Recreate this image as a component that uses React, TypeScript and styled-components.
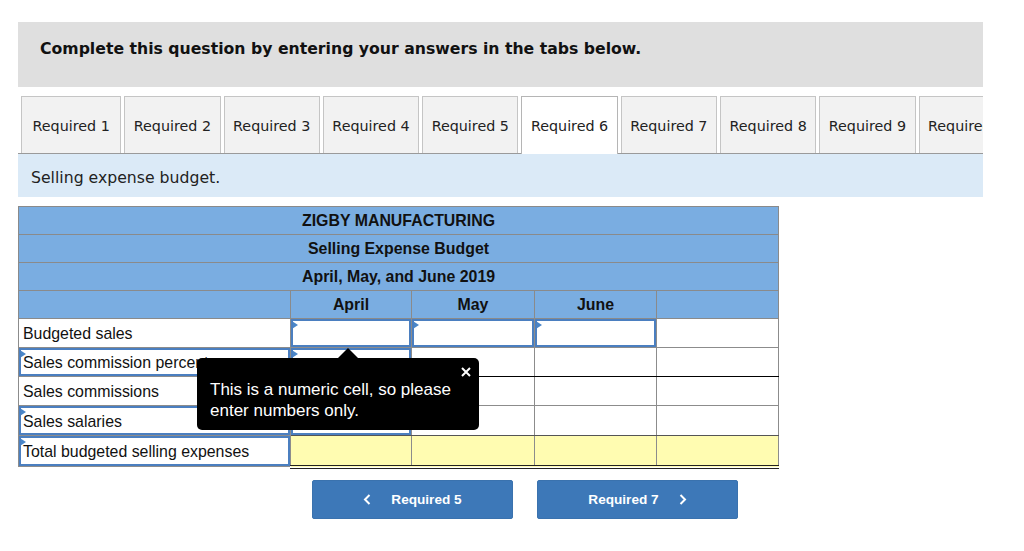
import React from 'react'
import styled, { createGlobalStyle, css } from 'styled-components'

const GlobalStyle = createGlobalStyle`
  body {
    margin: 0;
    background: #fff;
    font-family: "DejaVu Sans", Verdana, sans-serif;
  }
`

const Page = styled.div`
  width: 965px;
  margin-left: 18px;
  padding-top: 22px;
`

const Instructions = styled.div`
  height: 65px;
  box-sizing: border-box;
  padding: 17px 0 0 22px;
  background: #dfdfdf;
  font-weight: bold;
  font-size: 15.7px;
  line-height: 20px;
  color: #111;
`

const TabStrip = styled.div`
  display: flex;
  align-items: flex-start;
  gap: 3px;
  height: 58px;
  margin-top: 9px;
  padding-left: 3px;
  overflow: hidden;
  white-space: nowrap;
  background: linear-gradient(#9a9a9a, #9a9a9a) bottom / 100% 1px no-repeat;
`

const Tab = styled.div<{ $active?: boolean; $first?: boolean }>`
  flex: none;
  height: 57px;
  box-sizing: border-box;
  display: flex;
  align-items: center;
  padding: 2px ${p => (p.$first ? 10.5 : 8.5)}px 0;
  border: 1px solid #c5c5c5;
  border-bottom: none;
  background: #f2f2f2;
  font-size: 14.3px;
  color: #222;
  ${p =>
    p.$active &&
    css`
      height: 58px;
      padding-bottom: 1px;
      background: #fff;
      border-color: #b5b5b5;
    `}
`

const Prompt = styled.div`
  height: 43px;
  box-sizing: border-box;
  display: flex;
  align-items: center;
  padding: 3px 0 0 13px;
  background: #dbeaf7;
  font-size: 15.7px;
  color: #222;
`

const TableWrap = styled.div`
  position: relative;
  width: 760px;
  margin-top: 9px;
`

const Table = styled.table`
  width: 760px;
  table-layout: fixed;
  border-collapse: collapse;
  font-family: "Liberation Sans", Arial, sans-serif;
  font-size: 15.9px;
  color: #111;
`

const HeadCell = styled.th`
  padding: 0;
  height: 27px;
  line-height: 27px;
  background: #7aade1;
  border: 1px solid #8a8a8a;
  font-weight: bold;
  text-align: center;
`

const Cell = styled.td<{ $yellow?: boolean; $lineBelow?: string; $double?: boolean }>`
  padding: 0;
  border: 1px solid #8c8c8c;
  background: ${p => (p.$yellow ? '#fffcb1' : '#fff')};
  ${p => p.$lineBelow && css`border-bottom-color: ${p.$lineBelow};`}
  ${p => p.$double && css`border-bottom: 4px double #222;`}
`

const Plain = styled.div<{ $h?: number }>`
  height: ${p => p.$h ?? 28}px;
  display: flex;
  align-items: center;
  padding: 2px 0 0 4px;
  box-sizing: border-box;
  white-space: nowrap;
  overflow: hidden;
`

const InputBox = styled.div<{ $h?: number }>`
  position: relative;
  height: ${p => p.$h ?? 28}px;
  box-sizing: border-box;
  border: 2px solid #4b7fc0;
  display: flex;
  align-items: center;
  padding: 2px 0 0 2px;
  white-space: nowrap;
  overflow: hidden;

  &::before {
    content: '';
    position: absolute;
    left: -1px;
    top: 0;
    border-left: 6px solid #4a86c8;
    border-top: 4px solid transparent;
    border-bottom: 4px solid transparent;
  }
`

const Tooltip = styled.div`
  position: absolute;
  left: 179px;
  top: 152px;
  width: 282px;
  height: 72px;
  box-sizing: border-box;
  padding: 21px 0 0 13px;
  background: #000;
  border-radius: 5px;
  color: #fff;
  font-family: "Liberation Sans", Arial, sans-serif;
  font-size: 17px;
  line-height: 21px;

  &::before {
    content: '';
    position: absolute;
    top: -10px;
    left: 141px;
    border-left: 10px solid transparent;
    border-right: 10px solid transparent;
    border-bottom: 10px solid #000;
  }
`

const Close = styled.svg`
  position: absolute;
  top: 9px;
  right: 8px;
`

const NavRow = styled.div`
  display: flex;
  gap: 24px;
  margin-top: 11px;
  padding-left: 294px;
`

const NavButton = styled.div`
  width: 201px;
  height: 39px;
  box-sizing: border-box;
  display: flex;
  align-items: center;
  justify-content: center;
  gap: 20px;
  background: #3d78b8;
  border: 1px solid #3a72ae;
  border-radius: 2px;
  color: #fff;
  font-family: "Liberation Sans", Arial, sans-serif;
  font-weight: bold;
  font-size: 13.6px;
`

const Chevron = ({ dir }: { dir: 'left' | 'right' }) => (
  <svg width="8" height="11" viewBox="0 0 8 11">
    <polyline
      points={dir === 'left' ? '6.5,1 2,5.5 6.5,10' : '1.5,1 6,5.5 1.5,10'}
      fill="none"
      stroke="#fff"
      strokeWidth="2"
    />
  </svg>
)

const tabs = Array.from({ length: 10 }, (_, i) => `Required ${i + 1}`)

export default function App() {
  return (
    <>
      <GlobalStyle />
      <Page>
        <Instructions>Complete this question by entering your answers in the tabs below.</Instructions>

        <TabStrip>
          {tabs.map((t, i) => (
            <Tab key={t} $first={i === 0} $active={i === 5}>
              {t}
            </Tab>
          ))}
        </TabStrip>

        <Prompt>Selling expense budget.</Prompt>

        <TableWrap>
          <Table>
            <colgroup>
              <col style={{ width: 272 }} />
              <col style={{ width: 121 }} />
              <col style={{ width: 123 }} />
              <col style={{ width: 122 }} />
              <col style={{ width: 122 }} />
            </colgroup>
            <thead>
              <tr>
                <HeadCell colSpan={5}>ZIGBY MANUFACTURING</HeadCell>
              </tr>
              <tr>
                <HeadCell colSpan={5}>Selling Expense Budget</HeadCell>
              </tr>
              <tr>
                <HeadCell colSpan={5}>April, May, and June 2019</HeadCell>
              </tr>
              <tr>
                <HeadCell />
                <HeadCell>April</HeadCell>
                <HeadCell>May</HeadCell>
                <HeadCell>June</HeadCell>
                <HeadCell />
              </tr>
            </thead>
            <tbody>
              <tr>
                <Cell><Plain>Budgeted sales</Plain></Cell>
                <Cell><InputBox /></Cell>
                <Cell><InputBox /></Cell>
                <Cell><InputBox /></Cell>
                <Cell><Plain /></Cell>
              </tr>
              <tr>
                <Cell><InputBox>Sales commission percentage</InputBox></Cell>
                <Cell><InputBox /></Cell>
                <Cell $lineBelow="#000"><Plain /></Cell>
                <Cell $lineBelow="#000"><Plain /></Cell>
                <Cell $lineBelow="#000"><Plain /></Cell>
              </tr>
              <tr>
                <Cell><Plain>Sales commissions</Plain></Cell>
                <Cell><InputBox /></Cell>
                <Cell><Plain /></Cell>
                <Cell><Plain /></Cell>
                <Cell><Plain /></Cell>
              </tr>
              <tr>
                <Cell><InputBox $h={29}>Sales salaries</InputBox></Cell>
                <Cell $lineBelow="#555"><InputBox $h={29} /></Cell>
                <Cell $lineBelow="#555"><Plain $h={29} /></Cell>
                <Cell $lineBelow="#555"><Plain $h={29} /></Cell>
                <Cell $lineBelow="#555"><Plain $h={29} /></Cell>
              </tr>
              <tr>
                <Cell><InputBox $h={30}>Total budgeted selling expenses</InputBox></Cell>
                <Cell $yellow $double><Plain $h={28} /></Cell>
                <Cell $yellow $double><Plain $h={28} /></Cell>
                <Cell $yellow $double><Plain $h={28} /></Cell>
                <Cell $yellow $double><Plain $h={28} /></Cell>
              </tr>
            </tbody>
          </Table>

          <Tooltip>
            This is a numeric cell, so please
            <br />
            enter numbers only.
            <Close width="10" height="10" viewBox="0 0 10 10">
              <path d="M1 1 L9 9 M9 1 L1 9" stroke="#fff" strokeWidth="2" />
            </Close>
          </Tooltip>
        </TableWrap>

        <NavRow>
          <NavButton>
            <Chevron dir="left" />
            Required 5
          </NavButton>
          <NavButton>
            Required 7
            <Chevron dir="right" />
          </NavButton>
        </NavRow>
      </Page>
    </>
  )
}
